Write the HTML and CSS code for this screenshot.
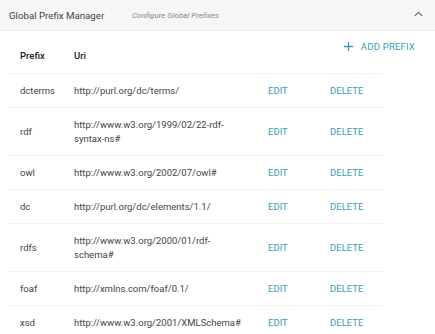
FILE: index.html
```html
<!DOCTYPE html>
<html lang="en">
<head>
    <meta charset="UTF-8">
    <meta name="viewport" content="width=device-width, initial-scale=1.0">
    <title>Global Prefix Manager</title>
    <link rel="stylesheet" href="styles.css">
</head>
<body>
    <div class="panel">
        <div class="panel-header">
            <span class="panel-title">Global Prefix Manager</span>
            <span class="panel-subtitle">Configure Global Prefixes</span>
            <svg class="chevron" width="9" height="6" viewBox="0 0 9 6">
                <path d="M0.8 5 L4.5 1.3 L8.2 5" fill="none" stroke="#777" stroke-width="1.3"/>
            </svg>
        </div>
        <div class="panel-body">
            <button type="button" class="add-btn">
                <svg width="9" height="9" viewBox="0 0 9 9">
                    <path d="M4.5 0 V9 M0 4.5 H9" stroke="currentColor" stroke-width="1.3"/>
                </svg>
                ADD PREFIX
            </button>
            <table>
                <thead>
                    <tr>
                        <th class="col-prefix">Prefix</th>
                        <th class="col-uri">Uri</th>
                        <th class="col-edit"></th>
                        <th class="col-delete"></th>
                    </tr>
                </thead>
                <tbody id="prefix-table">
                    <!-- Rows will be inserted here -->
                </tbody>
            </table>
        </div>
    </div>

    <script>
        const prefixes = [
            { prefix: 'dcterms', uri: 'http://purl.org/dc/terms/' },
            { prefix: 'rdf', uri: 'http://www.w3.org/1999/02/22-rdf-syntax-ns#' },
            { prefix: 'owl', uri: 'http://www.w3.org/2002/07/owl#' },
            { prefix: 'dc', uri: 'http://purl.org/dc/elements/1.1/' },
            { prefix: 'rdfs', uri: 'http://www.w3.org/2000/01/rdf-schema#' },
            { prefix: 'foaf', uri: 'http://xmlns.com/foaf/0.1/' },
            { prefix: 'xsd', uri: 'http://www.w3.org/2001/XMLSchema#' }
        ];

        function createRow(item) {
            const row = document.createElement('tr');
            row.innerHTML = `
                <td>${item.prefix}</td>
                <td class="uri">${item.uri}</td>
                <td><button class="link-btn">EDIT</button></td>
                <td><button class="link-btn delete-btn">DELETE</button></td>
            `;
            row.querySelector('.delete-btn').addEventListener('click', () => row.remove());
            return row;
        }

        const tableBody = document.getElementById('prefix-table');
        prefixes.forEach(item => tableBody.appendChild(createRow(item)));
    </script>
</body>
</html>
```

FILE: styles.css
```css
body {
    margin: 0;
    font-family: Roboto, "Liberation Sans", sans-serif;
    color: #333;
    background-color: #fff;
}
.panel-header {
    display: flex;
    align-items: center;
    height: 30px;
    padding: 0 12px 0 9px;
    background-color: #f6f6f6;
    border-bottom: 1px solid #e8e8e8;
}
.panel-title {
    font-size: 9.7px;
    color: #444;
    width: 123px;
}
.panel-subtitle {
    font-size: 8px;
    font-style: italic;
    color: #888;
    flex: 1;
}
.chevron {
    display: block;
    margin-bottom: 2px;
}
.panel-body {
    display: grid;
    padding: 0 9px;
}
.add-btn {
    grid-area: 1 / 1;
    justify-self: end;
    align-self: start;
    display: flex;
    align-items: center;
    gap: 8px;
    margin: 10px 11px 0 0;
    padding: 0;
    border: none;
    background: none;
    font-family: inherit;
    font-size: 9.5px;
    letter-spacing: 0.2px;
    color: #3a9db3;
    cursor: pointer;
}
table {
    grid-area: 1 / 1;
    width: 375px;
    table-layout: fixed;
    border-collapse: collapse;
    font-size: 9.5px;
}
th, td {
    text-align: left;
    padding: 0;
    border-bottom: 1px solid #f1f1f1;
    line-height: 13.25px;
}
th {
    font-weight: 500;
    color: #222;
    height: 35px;
    padding-top: 7px;
}
td {
    padding: 10px 0;
    color: #444;
}
.col-prefix {
    width: 54px;
    padding-left: 11px;
}
td:first-child {
    padding-left: 11px;
}
.col-uri {
    width: 194px;
}
.uri {
    padding-right: 38px;
}
.col-edit {
    width: 62px;
}
.link-btn {
    padding: 0;
    border: none;
    background: none;
    font-family: inherit;
    font-size: 9.5px;
    line-height: 13.25px;
    color: #3a9db3;
    cursor: pointer;
}
```
